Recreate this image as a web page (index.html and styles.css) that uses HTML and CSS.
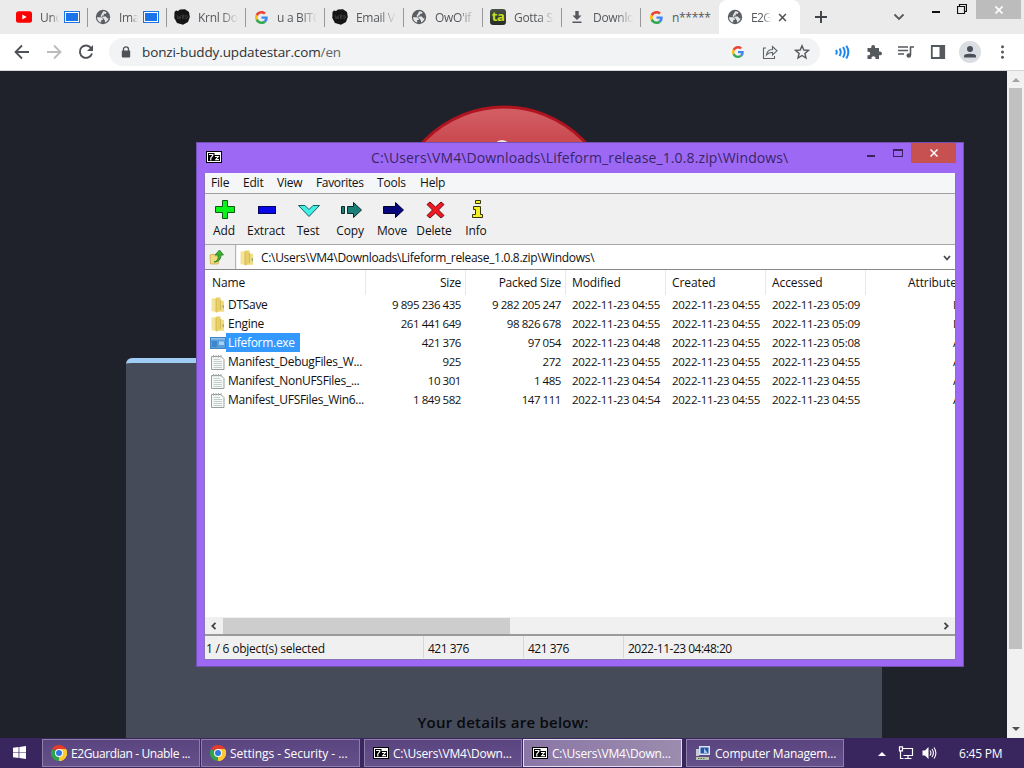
FILE: index.html
```html
<!DOCTYPE html>
<html lang="en">

<head>
    <meta charset="UTF-8">
    <meta name="viewport" content="width=device-width, initial-scale=1.0">
    <title>Desktop</title>
    <link rel="stylesheet" href="styles.css">
</head>

<body>
    <svg class="defs">
        <symbol id="globe" viewBox="0 0 16 16">
            <circle cx="8" cy="8" r="7.200" fill="#5b5e63"/>
            <path d="M2 8.200H6.200L7.800 9.800V11H6.200V13.600C3.800 13 2 11 2 8.200Z M8.200 2.200C9.500 2.200 10.500 2.600 11.500 3.200L10.800 4.800H8.800V6.500H7.200V8L9 7.500H11L12 9.300 13.500 9.500 14 7.500C14 9.500 12.500 12.500 10 13.500V11.800L8.500 9.500 5.500 7 7 4.500Z" fill="#e6e7e9"/>
        </symbol>
        <symbol id="google" viewBox="0 0 48 48">
            <path fill="#EA4335" d="M24 9.500c3.500 0 6.700 1.200 9.200 3.600l6.900-6.900C35.900 2.400 30.500 0 24 0 14.600 0 6.500 5.400 2.600 13.200l8 6.200C12.400 13.700 17.700 9.500 24 9.500z"/>
            <path fill="#4285F4" d="M47 24.500c0-1.600-.2-3.100-.4-4.500H24v9h12.900c-.6 3-2.300 5.500-4.800 7.200l7.700 6C44.400 38 47 32 47 24.500z"/>
            <path fill="#FBBC05" d="M10.500 28.600c-.5-1.500-.8-3-.8-4.600s.3-3.100.8-4.600l-8-6.200C1 16.500 0 20.100 0 24s1 7.500 2.600 10.800z"/>
            <path fill="#34A853" d="M24 48c6.500 0 11.900-2.100 15.900-5.800l-7.700-6c-2.200 1.500-4.900 2.300-8.200 2.300-6.300 0-11.600-4.200-13.500-9.900l-8 6.200C6.500 42.600 14.600 48 24 48z"/>
        </symbol>
        <symbol id="wrd" viewBox="0 0 16 16">
            <path d="M.5 3L2 1.500 4 2 6 .5 11 .3 15 3 15.800 8 14 13 9 15.800 3 14 .3 9Z" fill="#151515"/>
            <path d="M3 6L4 10 5 7.500 6 10 7 6M8.500 10V6H10V8H8.500L10.500 10M12 6V10L14 8Z" fill="none" stroke="#404145" stroke-width=".8"/>
        </symbol>
        <symbol id="sevenzip" viewBox="0 0 16 12">
            <rect x=".5" y=".5" width="15" height="11" fill="#fff" stroke="#000"/>
            <path d="M2 2H8.500V4H14V10H2Z" fill="#000"/>
            <path d="M3 3.500H6.800V4.500L4.800 7V9.500" fill="none" stroke="#fff" stroke-width="1.200"/>
            <path d="M9 5.500H12.300L9.700 8.600H13" fill="none" stroke="#fff" stroke-width="1.100"/>
        </symbol>
        <symbol id="folder" viewBox="0 0 16 16">
            <path d="M1.500 1.500L6 1 7 15 1.500 14.200Z" fill="#f4e49a"/>
            <path d="M6 .5H10.500V14L6 15.800Z" fill="#e9cf68"/>
            <path d="M10 3L14 4V14.800H7L10 13Z" fill="#f0dc82"/>
            <path d="M6 2V15M10.500 3V13" stroke="#cbab42" stroke-width=".7"/>
            <path d="M12 9L14 8V12Z" fill="#8ab37c"/>
        </symbol>
        <symbol id="sheet" viewBox="0 0 16 16">
            <path d="M1.500 2.500H11L14 5.500V15.500H1.500Z" fill="#f7f9f8" stroke="#98a19f"/>
            <path d="M3.500 5.500H10M3.500 7.500H12M3.500 9.500H12M3.500 11.500H12M3.500 13.500H12" stroke="#c3cfcb"/>
            <path d="M3.500 1V3.500M6 1V3.500M8.500 1V3.500M11 1V3.500" stroke="#a0a8a6"/>
        </symbol>
        <symbol id="exe" viewBox="0 0 16 16">
            <rect x=".5" y="2.500" width="15" height="11" fill="#5a9fdc" stroke="#4183be"/>
            <path d="M1 3H15V4.500H1Z" fill="#8ec3ef"/>
            <path d="M2 6H7V12H2Z" fill="#3d86cc"/>
            <path d="M9 6.500H14V10H9Z" fill="#a9d0f2"/>
        </symbol>
        <symbol id="chrome" viewBox="0 0 16 16">
            <path d="M8 8L1.070 4A8 8 0 0 1 14.930 4Z" fill="#e33b2e"/>
            <path d="M8 8L14.930 4A8 8 0 0 1 8 16Z" fill="#fcc934"/>
            <path d="M8 8V16A8 8 0 0 1 1.070 4Z" fill="#2fa24c"/>
            <path d="M8 4H14.930A8 8 0 0 1 8 16L11.500 10Z" fill="#fcc934"/>
            <circle cx="8" cy="8" r="4" fill="#fff"/>
            <circle cx="8" cy="8" r="3" fill="#2d78e0"/>
        </symbol>
    </svg>

    <header class="tab-strip">
        <div class="tab">
            <svg class="favicon" viewBox="0 0 16 16"><rect y="2.300" width="16" height="11.400" rx="2.500" fill="#f00"/><path d="M6.300 5.500V10.500L10.700 8Z" fill="#fff"/></svg>
            <span class="tab-title short">Unc</span><i class="pip"></i>
        </div>
        <div class="tab">
            <svg class="favicon"><use href="#globe"/></svg>
            <span class="tab-title short">Ima</span><i class="pip"></i>
        </div>
        <div class="tab"><svg class="favicon"><use href="#wrd"/></svg><span class="tab-title">Krnl Do</span></div>
        <div class="tab"><svg class="favicon google"><use href="#google"/></svg><span class="tab-title">u a BITC</span></div>
        <div class="tab"><svg class="favicon"><use href="#wrd"/></svg><span class="tab-title">Email V</span></div>
        <div class="tab"><svg class="favicon"><use href="#globe"/></svg><span class="tab-title">OwO'if</span></div>
        <div class="tab"><b class="favicon ta">ta</b><span class="tab-title">Gotta S</span></div>
        <div class="tab">
            <svg class="favicon" viewBox="0 0 16 16"><path d="M6.300 2H9.700V6.500H12.500L8 11 3.500 6.500H6.300ZM3.500 12.500H12.500V14H3.500Z" fill="#55585c"/></svg>
            <span class="tab-title">Downlo</span>
        </div>
        <div class="tab last"><svg class="favicon google"><use href="#google"/></svg><span class="tab-title">n*****</span></div>
        <div class="tab active">
            <svg class="favicon"><use href="#globe"/></svg><span class="tab-title">E2G</span>
            <svg class="tab-close" viewBox="0 0 10 10"><path d="M1.200 1.200L8.800 8.800M8.800 1.200L1.200 8.800" stroke="#4d5054" stroke-width="1.700"/></svg>
        </div>
        <svg class="new-tab" viewBox="0 0 12 12"><path d="M6 0V12M0 6H12" stroke="#3f4246" stroke-width="1.900"/></svg>
        <div class="browser-buttons">
            <svg class="tab-search" viewBox="0 0 12 8"><path d="M1.500 1.500L6 6 10.500 1.500" fill="none" stroke="#55585c" stroke-width="1.800"/></svg>
            <i class="browser-min"></i>
            <svg class="browser-restore" viewBox="0 0 10 10"><path d="M.5 2.500H7.500V9.500H.5ZM2.500 2V.5H9.500V7.500H8" fill="none" stroke="#111" stroke-width="1.200"/></svg>
            <div class="browser-close"><svg viewBox="0 0 8 8"><path d="M.5 .5L7.500 7.500M7.500 .5L.5 7.500" stroke="#fff" stroke-width="1.600"/></svg></div>
        </div>
    </header>

    <nav class="toolbar">
        <svg class="nav-icon" viewBox="0 0 16 16"><path d="M15 8H2M8 1.500L1.500 8 8 14.500" fill="none" stroke="#4e5155" stroke-width="1.800"/></svg>
        <svg class="nav-icon" viewBox="0 0 16 16"><path d="M1 8H14M8 1.500L14.500 8 8 14.500" fill="none" stroke="#babcbe" stroke-width="1.800"/></svg>
        <svg class="nav-icon" viewBox="0 0 16 16"><path d="M13.200 4.200A6.200 6.200 0 1 0 14 9.500" fill="none" stroke="#4e5155" stroke-width="1.900"/><path d="M15 1V7H9Z" fill="#4e5155"/></svg>
        <div class="omnibox">
            <svg class="lock" viewBox="0 0 10 12"><path d="M2.500 5V3.300a2.500 2.500 0 0 1 5 0V5" fill="none" stroke="#4e5155" stroke-width="1.300"/><rect x=".8" y="4.600" width="8.400" height="7" rx="1" fill="#4e5155"/></svg>
            <span class="url">bonzi-buddy.updatestar.com<em>/en</em></span>
            <svg class="omni-google"><use href="#google"/></svg>
            <svg class="omni-icon" viewBox="0 0 16 16"><path d="M4 4H1.500V14.500H12.500V12M4.500 11C5 7.500 7.500 5.500 10.500 5.500V2.500L15 6.800 10.500 11V8.300C8 8.300 6 9.200 4.500 11Z" fill="none" stroke="#5f6368" stroke-width="1.100"/></svg>
            <svg class="omni-icon" viewBox="0 0 16 16"><path d="M8 1.800L9.800 6 14.400 6.400 10.900 9.400 12 14 8 11.500 4 14 5.100 9.400 1.600 6.400 6.200 6Z" fill="none" stroke="#55585c" stroke-width="1.400"/></svg>
        </div>
        <div class="extensions">
            <svg viewBox="0 0 16 16"><path d="M2 6Q3.500 8 2 10.500M5.500 4.500Q8 8 5.500 12M9 3Q12.500 8 9 13.500M12.300 1.800Q16.500 8 12.300 14.500" fill="none" stroke="#1a86f0" stroke-width="2"/></svg>
            <svg viewBox="0 0 16 16"><path d="M1.500 4H5.300C4.800 2 6 1 7.200 1S9.500 2 9 4H13V7.500C15 7 16 8.200 16 9.400S15 11.700 13 11.200V15H9.500C10 13 8.700 12.200 7.500 12.200S5 13 5.500 15H1.500V11.200C3.500 11.500 4.200 10.500 4.200 9.400S3.300 7.500 1.500 7.800Z" fill="#55585c"/></svg>
            <svg viewBox="0 0 16 16"><path d="M0 3H10M0 6.500H10M0 10H6M12.500 11V3H16" fill="none" stroke="#55585c" stroke-width="1.600"/><circle cx="10.800" cy="11.500" r="2.300" fill="#55585c"/></svg>
            <svg viewBox="0 0 16 16"><path d="M1.800 2H14.200V14H1.800Z" fill="none" stroke="#55585c" stroke-width="1.800"/><path d="M9.500 2H14V14H9.500Z" fill="#55585c"/></svg>
            <svg class="avatar" viewBox="0 0 22 22"><circle cx="11" cy="11" r="11" fill="#dadde2"/><circle cx="11" cy="8" r="3" fill="#4b4f59"/><path d="M5 16.500V14.800C5 12 17 12 17 14.800V16.500Z" fill="#4b4f59"/></svg>
            <svg viewBox="0 0 16 16"><circle cx="8.500" cy="2.800" r="1.500" fill="#55585c"/><circle cx="8.500" cy="8" r="1.500" fill="#55585c"/><circle cx="8.500" cy="13.200" r="1.500" fill="#55585c"/></svg>
        </div>
    </nav>

    <main class="viewport">
        <div class="page">
            <svg class="badge-circle" viewBox="0 0 226 226">
                <defs>
                    <linearGradient id="red" x1="0" y1="0" x2="0" y2="1"><stop offset="0" stop-color="#d26066"/><stop offset=".2" stop-color="#c74349"/><stop offset="1" stop-color="#a01c22"/></linearGradient>
                </defs>
                <circle cx="113" cy="113" r="111" fill="url(#red)" stroke="#b0141f" stroke-width="3"/>
                <circle cx="111" cy="44" r="9" fill="#f3e4e8"/>
            </svg>
            <section class="panel">
                <p class="details">Your details are below:</p>
            </section>
        </div>
        <div class="scrollbar">
            <i class="arrow-up"></i>
            <div class="thumb"></div>
            <i class="arrow-down"></i>
        </div>
    </main>

    <div class="window">
        <div class="window-title">
            <svg class="window-icon"><use href="#sevenzip"/></svg>
            <span class="window-name">C:\Users\VM4\Downloads\Lifeform_release_1.0.8.zip\Windows\</span>
            <i class="win-min"></i>
            <i class="win-max"></i>
            <div class="win-close"><svg viewBox="0 0 8 8"><path d="M.5 .5L7.500 7.500M7.500 .5L.5 7.500" stroke="#fff" stroke-width="1.500"/></svg></div>
        </div>
        <div class="window-body">
            <div class="menu">
                <span class="m-file">File</span><span class="m-edit">Edit</span><span class="m-view">View</span><span class="m-fav">Favorites</span><span class="m-tools">Tools</span><span>Help</span>
            </div>
            <div class="actions">
                <div class="action"><svg viewBox="0 0 24 20"><path d="M9.500 .5H14.500V6.500H21.500V12.500H14.500V18.500H9.500V12.500H2.500V6.500H9.500Z" fill="#0cf21c" stroke="#0a5a10"/></svg>Add</div>
                <div class="action"><svg viewBox="0 0 24 20"><rect x="3.500" y="6.500" width="17" height="7" fill="#0808e8" stroke="#05055a"/></svg>Extract</div>
                <div class="action"><svg viewBox="0 0 24 20"><path d="M1.500 5.500H8L12 9.500 16 5.500H22.500L12 16.500Z" fill="#3feee6" stroke="#16625f"/></svg>Test</div>
                <div class="action"><svg viewBox="0 0 24 20"><path d="M2.500 6.500H5.500V13.500H2.500ZM8.500 6.500H14.500V2.500L22.500 10 14.500 17.500V13.500H8.500Z" fill="#188078" stroke="#0a2a28"/></svg>Copy</div>
                <div class="action"><svg viewBox="0 0 24 20"><path d="M2.500 6.500H14.500V2.500L22.500 10 14.500 17.500V13.500H2.500Z" fill="#06067c" stroke="#020230"/></svg>Move</div>
                <div class="action"><svg viewBox="0 0 24 20"><path d="M4 4.500L7 2 12.500 7 18 2 21 4.500 15.500 10 21 15.500 18 18 12.500 13 7 18 4 15.500 9.500 10Z" fill="#f01822" stroke="#6c0d10"/></svg>Delete</div>
                <div class="action"><svg viewBox="0 0 24 20"><path d="M10.500 .5H15.500V3.500H10.500ZM8.500 6.500H15.500V14.500H17.500V17.500H7.500V14.500H10.500V9.500H8.500Z" fill="#f4ee26" stroke="#35330a"/></svg>Info</div>
            </div>
            <div class="address">
                <div class="up"><svg viewBox="0 0 16 16"><path d="M1 6L5 5 6 7H11L9 15H1.500Z" fill="#f3dc80" stroke="#c9a53c" stroke-width=".7"/><path d="M5 13C9 12 9.500 9 9 6H6L10.500 1 14.500 6H12C12 10 10 13 5 13Z" fill="#37b52c" stroke="#1b681a" stroke-width=".7"/></svg></div>
                <div class="path">
                    <svg class="row-icon"><use href="#folder"/></svg>
                    <span>C:\Users\VM4\Downloads\Lifeform_release_1.0.8.zip\Windows\</span>
                    <svg class="drop" viewBox="0 0 8 6"><path d="M1 1L4 4.500 7 1" fill="none" stroke="#44474a" stroke-width="1.700"/></svg>
                </div>
            </div>
            <div class="list">
                <div class="row head"><span>Name</span><span class="num">Size</span><span class="num">Packed Size</span><span>Modified</span><span>Created</span><span>Accessed</span><span class="attr">Attributes</span></div>
                <div class="row"><span class="name"><svg class="row-icon"><use href="#folder"/></svg><b>DTSave</b></span><span class="num">9 895 236 435</span><span class="num">9 282 205 247</span><span>2022-11-23 04:55</span><span>2022-11-23 04:55</span><span>2022-11-23 05:09</span><span class="flag">D</span></div>
                <div class="row"><span class="name"><svg class="row-icon"><use href="#folder"/></svg><b>Engine</b></span><span class="num">261 441 649</span><span class="num">98 826 678</span><span>2022-11-23 04:55</span><span>2022-11-23 04:55</span><span>2022-11-23 05:09</span><span class="flag">D</span></div>
                <div class="row"><span class="name"><svg class="row-icon"><use href="#exe"/></svg><b class="selected">Lifeform.exe</b></span><span class="num">421 376</span><span class="num">97 054</span><span>2022-11-23 04:48</span><span>2022-11-23 04:55</span><span>2022-11-23 05:08</span><span class="flag">A</span></div>
                <div class="row"><span class="name"><svg class="row-icon"><use href="#sheet"/></svg><b>Manifest_DebugFiles_W...</b></span><span class="num">925</span><span class="num">272</span><span>2022-11-23 04:55</span><span>2022-11-23 04:55</span><span>2022-11-23 04:55</span><span class="flag">A</span></div>
                <div class="row"><span class="name"><svg class="row-icon"><use href="#sheet"/></svg><b>Manifest_NonUFSFiles_...</b></span><span class="num">10 301</span><span class="num">1 485</span><span>2022-11-23 04:54</span><span>2022-11-23 04:55</span><span>2022-11-23 04:55</span><span class="flag">A</span></div>
                <div class="row"><span class="name"><svg class="row-icon"><use href="#sheet"/></svg><b>Manifest_UFSFiles_Win6...</b></span><span class="num">1 849 582</span><span class="num">147 111</span><span>2022-11-23 04:54</span><span>2022-11-23 04:55</span><span>2022-11-23 04:55</span><span class="flag">A</span></div>
            </div>
            <div class="hscroll">
                <svg viewBox="0 0 8 8"><path d="M5.500 .8L2.300 4 5.500 7.200" fill="none" stroke="#44474a" stroke-width="1.800"/></svg>
                <div class="hthumb"></div>
                <svg class="right" viewBox="0 0 8 8"><path d="M2.500 .8L5.700 4 2.500 7.200" fill="none" stroke="#44474a" stroke-width="1.800"/></svg>
            </div>
            <div class="status"><span>1 / 6 object(s) selected</span><span>421 376</span><span>421 376</span><span>2022-11-23 04:48:20</span></div>
        </div>
    </div>

    <footer class="taskbar">
        <svg class="start" viewBox="0 0 14 14"><path d="M0 2L6 1.200V6.600H0ZM6.800 1.100L14 0V6.600H6.800ZM0 7.400H6V12.800L0 12ZM6.800 7.400H14V14L6.800 12.900Z" fill="#fff"/></svg>
        <div class="task tight"><svg class="task-icon"><use href="#chrome"/></svg><span>E2Guardian - Unable ...</span></div>
        <div class="task gap"><svg class="task-icon"><use href="#chrome"/></svg><span>Settings - Security - ...</span></div>
        <div class="task"><svg class="task-icon seven"><use href="#sevenzip"/></svg><span>C:\Users\VM4\Down...</span></div>
        <div class="task gap current"><svg class="task-icon seven"><use href="#sevenzip"/></svg><span>C:\Users\VM4\Down...</span></div>
        <div class="task">
            <svg class="task-icon" viewBox="0 0 16 16"><path d="M4 1H15V10H4Z" fill="#d8e4ee"/><path d="M5.500 2.500H13.500V8.500H5.500Z" fill="#2453a8"/><path d="M9 3L12.500 8H9Z" fill="#a7c9f0"/><path d="M1 4H4V11H1Z" fill="#c3ccd4"/><path d="M1 12H14V15H1Z" fill="#b9c3b4"/><path d="M3 13.500H10" stroke="#5c7a52" stroke-dasharray="1.500 1"/></svg>
            <span>Computer Managem...</span>
        </div>
        <div class="tray">
            <i class="tray-up"></i>
            <svg class="net" viewBox="0 0 16 14"><path d="M5 2.500H14.500V9.500H5.500M10 9.500V12.500M6.500 12.500H13.500M2.500 5V12.500H5.500M1.500 .8H4.500V4.800H1.500Z" fill="none" stroke="#fff" stroke-width="1.200"/></svg>
            <svg class="vol" viewBox="0 0 15 14"><path d="M.5 4.500H3L6.500 1V13L3 9.500H.5Z" fill="#fff"/><path d="M8 4.500Q9.800 7 8 9.500M10 3Q12.800 7 10 11M12 1.500Q15.800 7 12 12.500" fill="none" stroke="#fff" stroke-width="1.100"/></svg>
            <span class="clock">6:45 PM</span>
        </div>
    </footer>
</body>

</html>
```
FILE: styles.css
```css
* {
    box-sizing: border-box;
}

body {
    margin: 0;
    width: 1024px;
    height: 768px;
    overflow: hidden;
    display: flex;
    flex-direction: column;
    font-family: "Open Sans", "Noto Sans", sans-serif;
    font-size: 12px;
    color: #111;
}

svg {
    flex-shrink: 0;
    display: block;
}

.defs {
    position: absolute;
    width: 0;
    height: 0;
}

/* browser tabs */
.tab-strip {
    display: flex;
    height: 34px;
    padding-left: 9px;
    background-color: #ebebeb;
}

.tab {
    display: flex;
    align-items: center;
    flex-shrink: 0;
    width: 79px;
    height: 34px;
    padding-left: 7px;
    color: #55585c;
    background: linear-gradient(#96989a, #96989a) right 0 top 8px / 1px 19px no-repeat;
}

.tab.last {
    width: 78px;
    background: none;
}

.tab.active {
    width: 81px;
    padding-left: 8px;
    background: #fff;
    border-radius: 8px 8px 0 0;
}

.favicon {
    width: 16px;
    height: 16px;
    flex-shrink: 0;
}

.favicon.google {
    width: 13px;
    height: 13px;
    margin: 0 1px 0 2px;
}

.ta {
    background: linear-gradient(#4b5147, #262b23);
    color: #c5e020;
    border-radius: 3px;
    font-size: 13px;
    line-height: 14px;
    text-align: center;
    letter-spacing: -0.5px;
}

.tab-title {
    width: 40px;
    margin-left: 8px;
    white-space: nowrap;
    letter-spacing: -0.3px;
    mask-image: linear-gradient(to right, #000 60%, transparent);
}

.tab-title.short {
    width: 19px;
    margin-right: 5px;
}

.last .tab-title {
    mask-image: none;
}

.active .tab-title {
    width: 20px;
    letter-spacing: -0.6px;
}

.pip {
    width: 16px;
    height: 12px;
    background-color: #1a73e8;
    border: 1px solid #1a73e8;
    box-shadow: inset 0 0 0 1px #fff;
}

.tab-close {
    width: 9px;
    height: 9px;
    margin-left: 7px;
}

.new-tab {
    width: 12px;
    height: 12px;
    margin: 11px 0 0 15px;
}

.browser-buttons {
    display: flex;
    flex: 1;
    align-items: flex-start;
    padding-left: 66px;
}

.tab-search {
    width: 12px;
    height: 8px;
    margin-top: 13px;
}

.browser-min {
    width: 8px;
    height: 2px;
    margin: 11px 0 0 27px;
    background-color: #111;
}

.browser-restore {
    width: 10px;
    height: 10px;
    margin: 4px 0 0 17px;
}

.browser-close {
    display: flex;
    justify-content: center;
    align-items: center;
    width: 45px;
    height: 19px;
    margin-left: 9px;
    background-color: #bcbcbc;
}

.browser-close svg {
    width: 8px;
    height: 8px;
}

/* address toolbar */
.toolbar {
    display: flex;
    align-items: center;
    height: 37px;
    padding-left: 14px;
    background-color: #fff;
    border-bottom: 1px solid #d5d6d8;
}

.nav-icon {
    width: 16px;
    height: 16px;
    margin-right: 16px;
}

.omnibox {
    display: flex;
    align-items: center;
    width: 711px;
    height: 28px;
    margin-left: -1px;
    padding-left: 12px;
    border-radius: 14px;
    background-color: #f1f3f4;
}

.lock {
    width: 10px;
    height: 12px;
    margin-right: 11px;
}

.url {
    flex: 1;
    font-size: 13.5px;
    letter-spacing: -0.12px;
    color: #2f3235;
}

.url em {
    font-style: normal;
    color: #5f6368;
}

.omni-google {
    width: 12px;
    height: 12px;
    margin-right: 18px;
}

.omni-icon {
    width: 16px;
    height: 16px;
    margin-right: 16px;
}

.omni-icon:last-child {
    margin-right: 10px;
}

.extensions {
    display: flex;
    align-items: center;
    gap: 16px;
    margin-left: 14px;
}

.extensions svg {
    width: 16px;
    height: 16px;
}

.extensions .avatar {
    width: 22px;
    height: 22px;
    margin: 0 -3px;
}

/* web page */
.viewport {
    display: flex;
    height: 667px;
}

.page {
    position: relative;
    flex: 1;
    padding: 287px 125px 0 126px;
    background-color: #20222b;
}

.badge-circle {
    position: absolute;
    left: 391px;
    top: 34px;
    width: 226px;
    height: 226px;
}

.panel {
    position: relative;
    height: 380px;
    padding-top: 346px;
    border-top: 5px solid #a0cdf6;
    border-radius: 6px 0 0 0;
    background-color: #464b5a;
    text-align: center;
}

.details {
    margin: 0 0 0 -2px;
    font-family: "Open Sans", sans-serif;
    font-size: 15px;
    line-height: 27px;
    font-weight: 600;
    letter-spacing: 0.25px;
    color: #08090d;
}

.scrollbar {
    display: flex;
    flex-direction: column;
    align-items: center;
    width: 17px;
    background-color: #f1f1f1;
}

.arrow-up,
.arrow-down {
    border: 4px solid transparent;
}

.arrow-up {
    margin-top: 3px;
    border-bottom-color: #a3a3a3;
}

.arrow-down {
    margin-top: auto;
    margin-bottom: 3px;
    border-top-color: #505050;
}

.thumb {
    width: 13px;
    height: 561px;
    margin-top: 6px;
    background-color: #c1c1c1;
}

/* archive manager window */
.window {
    position: absolute;
    left: 196px;
    top: 142px;
    width: 768px;
    height: 525px;
    display: flex;
    flex-direction: column;
    padding: 0 7px 6px;
    background-color: #9d69f4;
    border: 1px solid #7350b4;
}

.window-title {
    display: flex;
    height: 30px;
    flex-shrink: 0;
}

.window-icon {
    width: 16px;
    height: 12px;
    margin: 8px 0 0 2px;
}

.window-name {
    width: 419px;
    margin-left: 149px;
    font-size: 14px;
    line-height: 30px;
    letter-spacing: 0.12px;
    white-space: nowrap;
    color: #3a2468;
}

.win-min {
    width: 8px;
    height: 2px;
    margin: 12px 0 0 79px;
    background-color: #38235f;
}

.win-max {
    width: 10px;
    height: 8px;
    margin: 6px 0 0 18px;
    border: 1px solid #38235f;
    border-top-width: 2px;
}

.win-close {
    display: flex;
    justify-content: center;
    align-items: center;
    width: 45px;
    height: 20px;
    margin-left: 8px;
    background-color: #c75050;
}

.win-close svg {
    width: 8px;
    height: 8px;
}

.window-body {
    display: flex;
    flex-direction: column;
    flex: 1;
    overflow: hidden;
    border: 1px solid #8b72bd;
    border-top: none;
    background-color: #fff;
}

.menu {
    display: flex;
    height: 21px;
    padding-left: 6px;
    line-height: 20px;
    background-color: #f5f6f7;
    border-bottom: 1px solid #a0a0a0;
    letter-spacing: -0.2px;
}

.m-file {
    width: 32px;
}

.m-edit {
    width: 34px;
}

.m-view {
    width: 39px;
}

.m-fav {
    width: 61px;
    letter-spacing: -0.35px;
}

.m-tools {
    width: 43px;
}

.actions {
    display: flex;
    height: 51px;
    background-color: #f0f0f0;
    border-bottom: 1px solid #a8a8a8;
}

.action {
    display: flex;
    flex-direction: column;
    align-items: center;
    width: 42px;
    margin: 0 2px 0 -2px;
    line-height: 16px;
    letter-spacing: -0.15px;
}

.action + .action {
    margin-left: -2px;
}

.action svg {
    width: 24px;
    height: 20px;
    margin: 6px 0 3px 2px;
}

.address {
    display: flex;
    height: 25px;
    background-color: #f0f0f0;
    border-bottom: 1px solid #888;
}

.up {
    width: 31px;
    padding: 4px 0 0 4px;
    border-right: 1px solid #b5b5b5;
}

.up svg {
    width: 16px;
    height: 16px;
}

.path {
    display: flex;
    flex: 1;
    align-items: center;
    margin-left: 1px;
    padding: 1px 0 0 2px;
    background-color: #fff;
}

.path span {
    flex: 1;
    margin-left: 6px;
    letter-spacing: -0.32px;
}

.row-icon {
    width: 16px;
    height: 16px;
}

.drop {
    width: 8px;
    height: 6px;
    margin-right: 4px;
}

.list {
    height: 347px;
    overflow: hidden;
}

.row {
    display: grid;
    grid-template-columns: 161px 100px 100px 100px 100px 100px 90px;
    height: 19px;
    line-height: 19px;
    font-size: 11.5px;
    letter-spacing: -0.27px;
    white-space: nowrap;
}

.row > span {
    padding-left: 6px;
}

.row b {
    font-size: 12px;
    font-weight: 400;
    letter-spacing: -0.29px;
}

.row .num {
    padding-right: 5px;
    text-align: right;
    letter-spacing: -0.44px;
}

.row .name {
    display: flex;
    align-items: center;
    padding-left: 5px;
}

.name b {
    padding: 0 2px;
}

.name .selected {
    padding: 0 5px 0 2px;
    background-color: #3399ff;
    color: #fff;
}

.row .flag {
    padding-left: 87px;
}

.row.head {
    height: 25px;
    line-height: 25px;
    font-size: 12px;
    letter-spacing: -0.1px;
}

.head span {
    border-right: 1px solid #e8e8e8;
}

.head > span:first-child {
    padding-left: 7px;
}

.head .num {
    padding-right: 4px;
    letter-spacing: -0.25px;
}

.row .attr {
    padding-left: 42px;
    border-right: none;
}

.hscroll {
    display: flex;
    align-items: center;
    height: 17px;
    background-color: #f0f0f0;
}

.hscroll svg {
    width: 8px;
    height: 8px;
    margin: 0 5px;
}

.hthumb {
    width: 287px;
    height: 16px;
    background-color: #cdcdcd;
}

.hscroll .right {
    margin-left: auto;
    margin-right: 5px;
}

.status {
    display: flex;
    flex: 1;
    line-height: 26px;
    letter-spacing: -0.5px;
    background-color: #f0f0f0;
    border-top: 2px solid #9a9a9a;
}

.status span {
    width: 100px;
    height: 22px;
    padding-left: 4px;
    border-right: 1px solid #d7d7d7;
}

.status span:first-child {
    width: 219px;
    padding-left: 1px;
    letter-spacing: -0.22px;
}

.status span:last-child {
    flex: 1;
    border-right: none;
}

/* taskbar */
.taskbar {
    display: flex;
    height: 30px;
    background-color: #3a265f;
    color: #fff;
}

.start {
    width: 13px;
    height: 13px;
    margin: 8px 16px 0 13px;
}

.task {
    display: flex;
    align-items: center;
    width: 158px;
    height: 28px;
    margin: 1px 1px 0 0;
    padding-left: 8px;
    white-space: nowrap;
    letter-spacing: -0.2px;
    background: linear-gradient(#5b4580, #66508a);
    border: 1px solid #8d7fa8;
}

.tight {
    letter-spacing: -0.4px;
}

.gap {
    width: 159px;
    margin-right: 4px;
}

.gap:not(.current) {
    letter-spacing: -0.05px;
}

.current {
    background: linear-gradient(100deg, #8a76a6, #9c8cae);
    border-color: #e4dcec;
}

.task-icon {
    width: 16px;
    height: 16px;
    margin-right: 4px;
}

.task-icon.seven {
    height: 12px;
}

.tray {
    display: flex;
    flex: 1;
    align-items: center;
}

.tray-up {
    margin: -2px 0 0 33px;
    border: 4px solid transparent;
    border-bottom-color: #fff;
}

.net {
    width: 16px;
    height: 14px;
    margin-left: 12px;
}

.vol {
    width: 15px;
    height: 14px;
    margin-left: 8px;
}

.clock {
    margin-left: 22px;
    letter-spacing: -0.2px;
}
```
